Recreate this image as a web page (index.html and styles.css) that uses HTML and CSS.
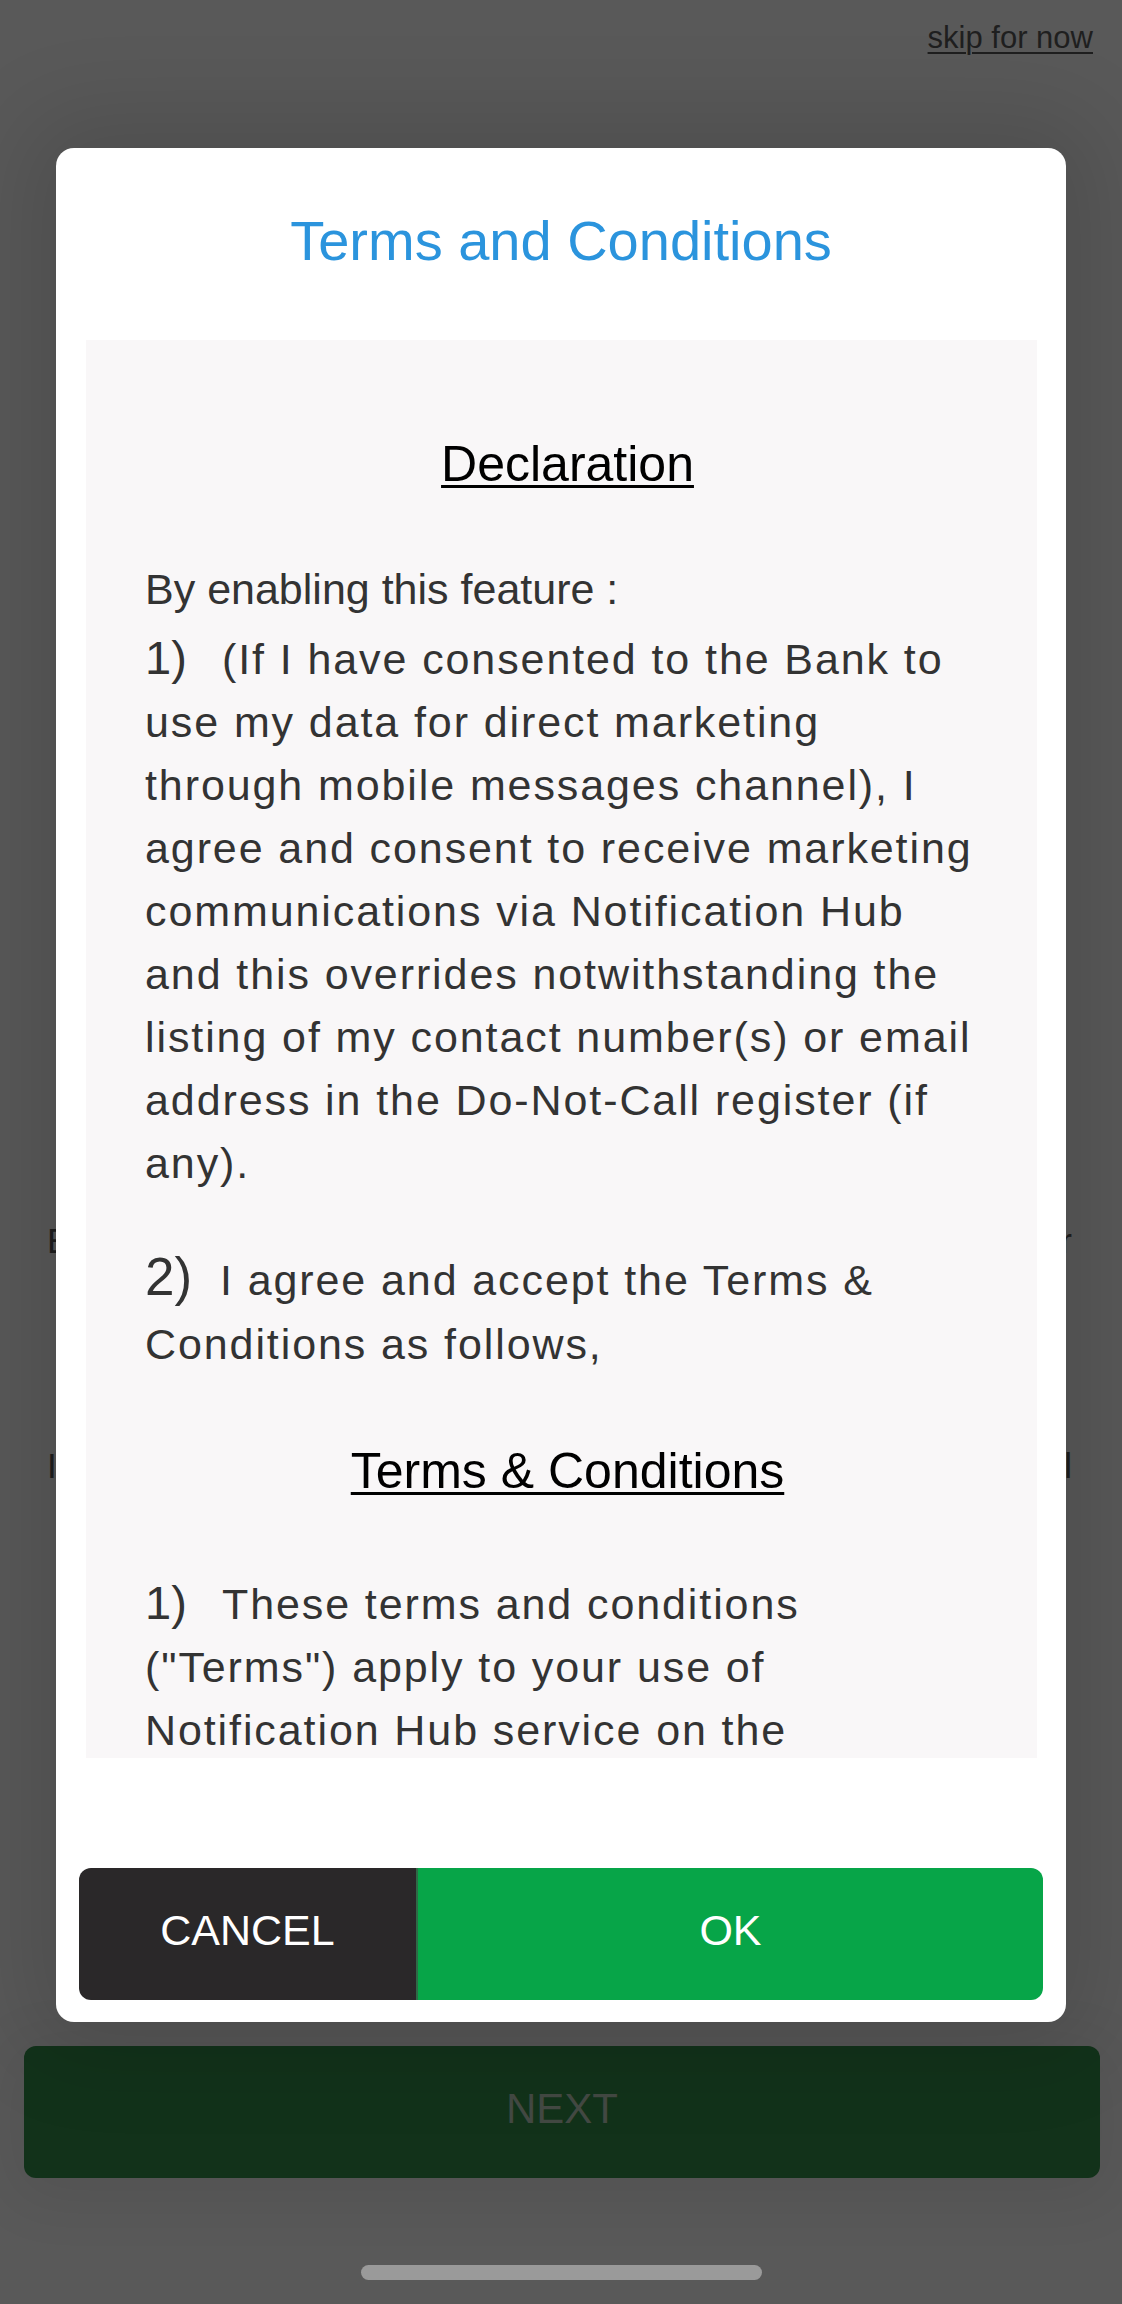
FILE: index.html
```html
<!DOCTYPE html>
<html lang="en">
<head>
<meta charset="utf-8">
<title>Terms and Conditions</title>
<link rel="stylesheet" href="styles.css">
</head>
<body>
<div class="screen">
  <header class="topbar">
    <a class="skip" href="#">skip for now</a>
  </header>

  <div class="bg-line bg-line-1"><span>Enjoy</span><span>for</span></div>
  <div class="bg-line bg-line-2"><span>In</span><span>email</span></div>

  <button class="next-btn" type="button">NEXT</button>
  <div class="home-indicator"></div>

  <div class="modal" role="dialog" aria-label="Terms and Conditions">
    <h1 class="modal-title">Terms and Conditions</h1>
    <div class="terms-box">
      <h2 class="terms-heading heading-declaration">Declaration</h2>
      <p class="intro">By enabling this feature :</p>
      <p class="clause clause-1"><span class="num">1)</span>(If I have consented to the Bank to<br>use my data for direct marketing<br>through mobile messages channel), I<br>agree and consent to receive marketing<br>communications via Notification Hub<br>and this overrides notwithstanding the<br>listing of my contact number(s) or email<br>address in the Do-Not-Call register (if<br>any).</p>
      <p class="clause clause-2"><span class="num num-large">2)</span>I agree and accept the Terms &amp;<br>Conditions as follows,</p>
      <h2 class="terms-heading heading-tc">Terms &amp; Conditions</h2>
      <p class="clause clause-3"><span class="num">1)</span>These terms and conditions<br>("Terms") apply to your use of<br>Notification Hub service on the</p>
    </div>
    <div class="actions">
      <button class="btn btn-cancel" type="button">CANCEL</button>
      <button class="btn btn-ok" type="button">OK</button>
    </div>
  </div>
</div>
</body>
</html>
```

FILE: styles.css
```css
* {
  box-sizing: border-box;
}

html, body {
  margin: 0;
  padding: 0;
}

body {
  font-family: "Liberation Sans", Arial, Helvetica, sans-serif;
  background: #595959;
}

.screen {
  position: relative;
  width: 1122px;
  height: 2304px;
  overflow: hidden;
  background: #595959;
  display: flex;
  flex-direction: column;
}

/* ---------- dimmed page behind the dialog ---------- */
.topbar {
  height: 55px;
  padding: 19px 29px 0 0;
  text-align: right;
}

.skip {
  font-size: 31px;
  line-height: 37px;
  color: #1f1f1f;
  text-decoration: underline;
  text-decoration-thickness: 2px;
  text-underline-offset: 4px;
}

.bg-line {
  display: flex;
  justify-content: space-between;
  padding: 0 50px 0 47px;
  font-size: 35px;
  line-height: 42px;
  color: #1e1e1e;
  white-space: nowrap;
}

.bg-line-1 {
  margin-top: 1165px;
}

.bg-line-2 {
  margin-top: 183px;
}

.next-btn {
  margin: 559px 22px 0 24px;
  height: 132px;
  padding: 0 0 6px;
  border: none;
  border-radius: 12px;
  background: #12321a;
  color: #434943;
  font-family: "Liberation Sans", Arial, sans-serif;
  font-size: 42px;
  box-shadow: 0 10px 60px 10px rgba(0, 0, 0, 0.08);
}

.home-indicator {
  align-self: center;
  margin-top: 87px;
  width: 401px;
  height: 15px;
  border-radius: 8px;
  background: #9a9a9a;
}

/* ---------- dialog ---------- */
.modal {
  position: absolute;
  top: 148px;
  left: 56px;
  width: 1010px;
  height: 1874px;
  background: #ffffff;
  border-radius: 18px;
  padding: 59px 0 22px;
  display: flex;
  flex-direction: column;
  box-shadow: 0 0 90px 30px rgba(0, 0, 0, 0.13);
}

.modal-title {
  margin: 0;
  text-align: center;
  font-size: 56px;
  line-height: 67px;
  font-weight: normal;
  color: #2b94dd;
}

.terms-box {
  margin: 66px 29px 0 30px;
  height: 1418px;
  overflow: hidden;
  background: #f9f7f8;
  padding: 94px 47px 0 59px;
  color: #333333;
}

.terms-heading {
  margin: 0;
  text-align: center;
  font-size: 50px;
  line-height: 60px;
  font-weight: normal;
  color: #000000;
  text-decoration: underline;
  text-decoration-thickness: 3px;
  text-underline-offset: 4px;
}

.intro {
  margin: 64px 0 0;
  font-size: 43px;
  line-height: 63px;
  white-space: nowrap;
}

.clause {
  margin: 0;
  font-size: 43px;
  line-height: 63px;
  letter-spacing: 1.9px;
  white-space: nowrap;
}

.clause-1 {
  margin-top: 7px;
}

.clause-2 {
  margin-top: 53px;
  line-height: 64px;
}

.heading-tc {
  margin-top: 65px;
}

.clause-3 {
  margin-top: 72px;
}

.num {
  display: inline-block;
  width: 77px;
  font-size: 47px;
  line-height: 1;
  letter-spacing: 0;
}

.num-large {
  width: 75px;
  font-size: 53px;
}

.actions {
  margin: 110px 23px 0;
  height: 132px;
  display: flex;
  border-radius: 12px;
  overflow: hidden;
}

.btn {
  border: none;
  margin: 0;
  height: 100%;
  padding: 0 0 7px;
  font-family: "Liberation Sans", Arial, sans-serif;
  font-size: 43px;
  color: #ffffff;
}

.btn-cancel {
  width: 337px;
  background: #2a2829;
}

.btn-ok {
  flex: 1;
  background: #07a548;
  border-left: 2px solid #2f6a46;
}
```
